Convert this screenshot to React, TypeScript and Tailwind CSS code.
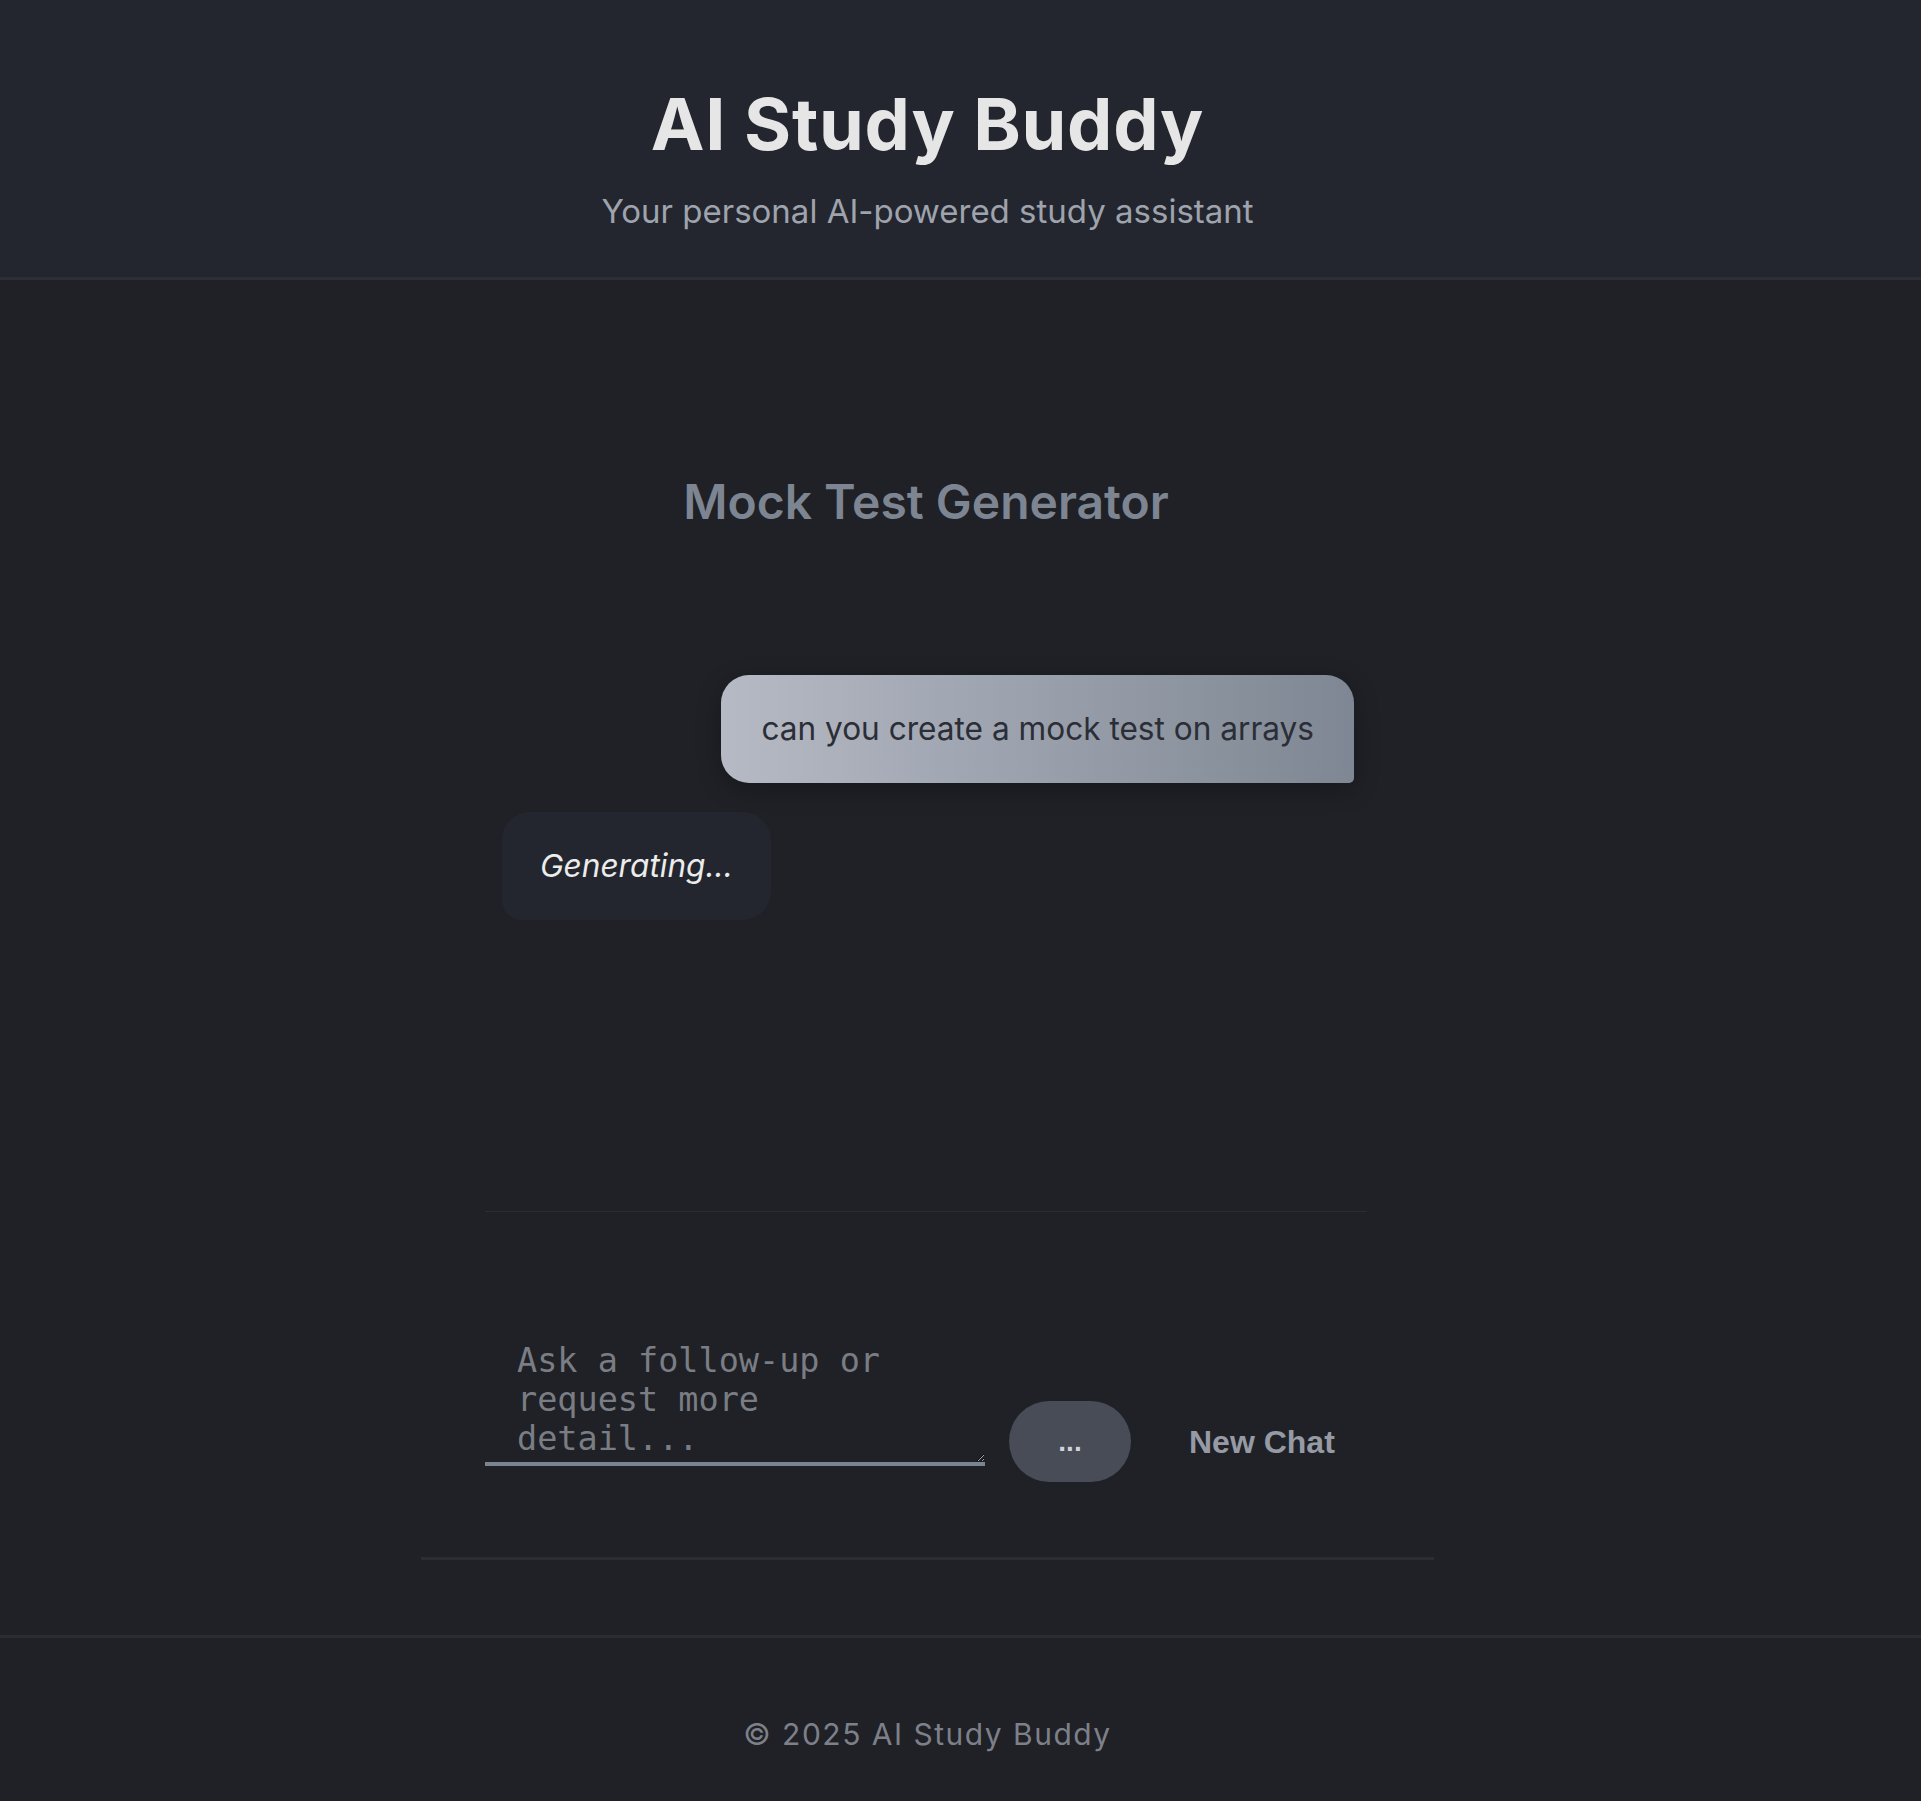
import { useState } from 'react'

const messages = [
  { role: 'user', text: 'can you create a mock test on arrays' },
  { role: 'assistant', text: 'Generating...', pending: true },
]

export default function App() {
  const [input, setInput] = useState('')

  return (
    <div className="flex min-h-screen flex-col bg-[#1f2126] font-['Inter','Noto_Sans',sans-serif]">
      <header className="flex h-[280px] flex-col items-center border-b-[3px] border-[#2c2f37] bg-[#23262e] pr-[66px] pt-[88px]">
        <h1 className="text-[72px] font-bold leading-none tracking-[0.01em] text-[#e6e6e6]">AI Study Buddy</h1>
        <p className="mt-[27px] text-[33px] leading-[48px] text-[#9ea3ad]">
          Your personal AI-powered study assistant
        </p>
      </header>

      <main className="flex justify-center pb-[75px] pr-[66px]">
        <section className="w-[1013px] border-b-[3px] border-[#2a2d33] pb-[75px] pl-[64px] pr-[67px] pt-[198px]">
          <h2 className="text-center text-[48px] font-semibold leading-none text-[#7c8591]">
            Mock Test Generator
          </h2>

          {/* messages */}
          <div className="mt-[149px] flex h-[537px] flex-col gap-[29px] border-b border-[#2a2d33] pl-[17px] pr-[13px]">
            {messages.map((m, i) =>
              m.role === 'user' ? (
                <div key={i} className="flex justify-end">
                  <div className="rounded-[28px] rounded-br-[5px] bg-gradient-to-r from-[#b6bac5] to-[#7e8793] px-[40px] py-[32px] text-[31.6px] leading-[44px] text-[#2b2e36] shadow-[0_6px_24px_rgba(0,0,0,0.28)]">
                    {m.text}
                  </div>
                </div>
              ) : (
                <div key={i} className="flex justify-start">
                  <div className="rounded-[28px] rounded-bl-[20px] bg-[#23262e] px-[38px] py-[32px] text-[31.6px] italic leading-[44px] text-[#ececec]">
                    {m.text}
                  </div>
                </div>
              ),
            )}
          </div>

          {/* input row */}
          <div className="flex items-end gap-[24px] pt-[119px]">
            <textarea
              rows={3}
              value={input}
              onChange={(e) => setInput(e.target.value)}
              placeholder="Ask a follow-up or request more detail..."
              className="mb-[16px] w-[500px] shrink-0 border-b-4 border-[#7b8491] bg-transparent px-[32px] pb-[4px] pt-[10px] font-['DejaVu_Sans_Mono',monospace] text-[33.5px] leading-[39px] text-[#d0d3d9] outline-none placeholder:text-[#7a7d84]"
            />
            <button className="flex h-[81px] w-[122px] shrink-0 items-center justify-center rounded-full bg-[#474c56] font-['Liberation_Sans',Arial,sans-serif] text-[28px] font-bold text-[#d0d3d9]">
              ...
            </button>
            <button className="flex h-[81px] shrink-0 items-center whitespace-nowrap px-[34px] font-['Liberation_Sans',Arial,sans-serif] text-[32px] font-bold text-[#959aa4]">
              New Chat
            </button>
          </div>
        </section>
      </main>

      <footer className="h-[166px] border-t-[3px] border-[#2a2d33] pr-[66px] pt-[74px] text-center">
        <p className="text-[30px] leading-[45px] tracking-[0.05em] text-[#7d8089]">© 2025 AI Study Buddy</p>
      </footer>
    </div>
  )
}
